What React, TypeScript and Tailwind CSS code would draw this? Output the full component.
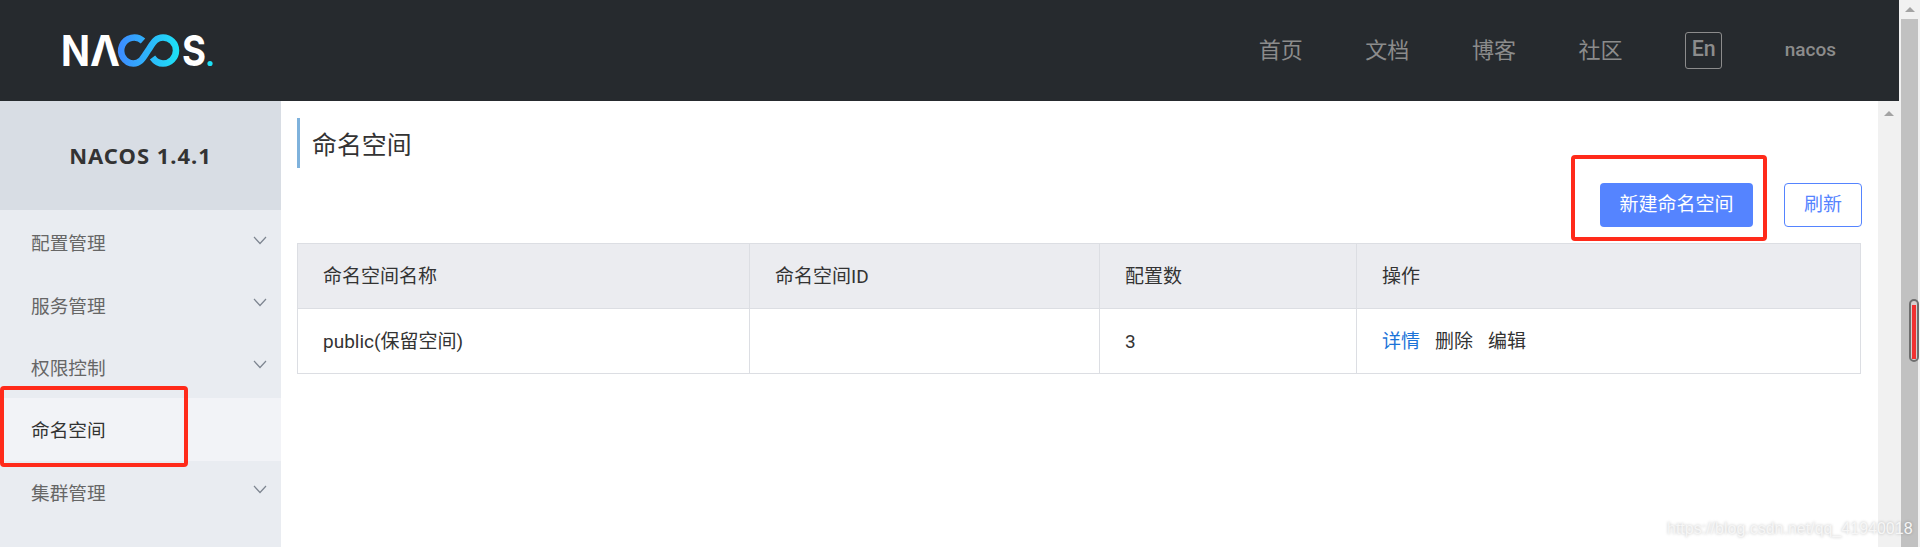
import React from 'react';

const navLinks = ['首页', '文档', '博客', '社区'];

const menuItems = [
  { label: '配置管理', hasChildren: true },
  { label: '服务管理', hasChildren: true },
  { label: '权限控制', hasChildren: true },
  { label: '命名空间', active: true },
  { label: '集群管理', hasChildren: true },
];

const Logo: React.FC = () => (
  <svg width="150" height="32" viewBox="0 0 150 32" className="block overflow-visible">
    <defs>
      <linearGradient id="infinity" gradientUnits="userSpaceOnUse" x1="56" y1="0" x2="115" y2="0">
        <stop offset="0" stopColor="#3d8bff" />
        <stop offset="1" stopColor="#1de1f6" />
      </linearGradient>
    </defs>
    <g className="fill-white font-['Inter',sans-serif] font-bold text-[43px]">
      <text x="-2" y="31" textLength="29" lengthAdjust="spacingAndGlyphs">N</text>
      <text x="27" y="31" textLength="30" lengthAdjust="spacingAndGlyphs">Λ</text>
      <text x="119" y="31" textLength="24" lengthAdjust="spacingAndGlyphs">S</text>
    </g>
    <path
      d="M80 6A13 13 0 1 0 70.5 28.5C78 28.5 80.5 22 85 15.5C89.5 9 92 2.5 100 2.5A13 13 0 1 1 100 28.5C95 28.5 92 26 89.5 22.5"
      fill="none"
      stroke="url(#infinity)"
      strokeWidth="6.5"
    />
    <circle cx="147" cy="28.5" r="2.6" fill="#1de1f6" />
  </svg>
);

const Chevron: React.FC = () => (
  <svg width="14" height="9" viewBox="0 0 14 9" className="mb-[4px]">
    <path d="M1 1l6 6.5L13 1" fill="none" stroke="#7d8590" strokeWidth="1.2" />
  </svg>
);

const ArrowUp: React.FC = () => (
  <svg width="10" height="5" viewBox="0 0 10 5" className="block">
    <path d="M5 0l5 5H0z" fill="#a3a3a3" />
  </svg>
);

const App: React.FC = () => {
  return (
    <div className="relative flex h-[547px] w-[1920px] overflow-hidden bg-white font-['Roboto','Noto_Sans_CJK_SC',sans-serif] text-[18.67px] text-[#333333]">
      <div className="flex min-w-0 flex-1 flex-col">
        <header className="flex h-[101px] shrink-0 items-center justify-between bg-[#262a2e] pl-[63px] pr-[63px]">
          <Logo />
          <nav className="flex items-center gap-[62.6px] text-[#8c8c8c]">
            {navLinks.map((link) => (
              <a key={link} className="text-[22px]">{link}</a>
            ))}
            <span className="flex h-[37px] w-[37px] items-start justify-center rounded-[3px] border border-[#8c8c8c] text-[21.33px] font-medium leading-[32px]">En</span>
            <span className="text-[19px] font-medium">nacos</span>
          </nav>
        </header>

        <div className="flex min-h-0 flex-1">
          <aside className="flex w-[281px] shrink-0 flex-col bg-[#e9ecf1]">
            <div className="flex h-[109px] shrink-0 items-center justify-center bg-[#d8dde4] font-['Noto_Sans',sans-serif] text-[22px] font-bold tracking-[1px]">
              NACOS 1.4.1
            </div>
            <ul className="pt-[1px]">
              {menuItems.map((item) => (
                <li
                  key={item.label}
                  className={
                    item.active
                      ? 'flex h-[62.4px] items-center justify-between bg-[#f2f3f7] pl-[31px] pr-[14px] text-[#333333]'
                      : 'flex h-[62.4px] items-center justify-between pl-[31px] pr-[14px] text-[#666666]'
                  }
                >
                  <span className="mt-[4px]">{item.label}</span>
                  {item.hasChildren && <Chevron />}
                </li>
              ))}
            </ul>
          </aside>

          <main className="min-w-0 flex-1 pl-[16px] pr-[17px] pt-[17px] text-[19px]">
            <div className="flex h-[50px] items-center border-l-[3px] border-[#7fb2dc] pl-[12px] pt-[5px] text-[24.9px]">
              命名空间
            </div>
            <div className="-mr-[1px] mt-[15px] flex justify-end gap-[31px]">
              <button className="h-[44px] w-[153px] rounded-[4px] bg-[#5584ff] text-white">新建命名空间</button>
              <button className="h-[44px] w-[78px] rounded-[4px] border border-[#5584ff] text-[#5584ff]">刷新</button>
            </div>
            <table className="mt-[16px] w-full table-fixed border-collapse border border-[#dcdee3]">
              <colgroup>
                <col className="w-[452px]" />
                <col className="w-[350px]" />
                <col className="w-[257px]" />
                <col />
              </colgroup>
              <thead>
                <tr className="h-[65px] bg-[#ebecf0] text-left">
                  <th className="border border-[#dcdee3] pl-[25px] pt-[2px] font-normal">命名空间名称</th>
                  <th className="border border-[#dcdee3] pl-[25px] pt-[2px] font-normal">命名空间ID</th>
                  <th className="border border-[#dcdee3] pl-[25px] pt-[2px] font-normal">配置数</th>
                  <th className="border border-[#dcdee3] pl-[25px] pt-[2px] font-normal">操作</th>
                </tr>
              </thead>
              <tbody>
                <tr className="h-[65px]">
                  <td className="border border-[#dcdee3] pl-[25px] pt-[2px]">public(保留空间)</td>
                  <td className="border border-[#dcdee3] pl-[25px] pt-[2px]"></td>
                  <td className="border border-[#dcdee3] pl-[25px] pt-[2px]">3</td>
                  <td className="border border-[#dcdee3] pl-[25px] pt-[2px]">
                    <div className="flex gap-[15px]">
                      <a className="text-[#1a73d8]">详情</a>
                      <a>删除</a>
                      <a>编辑</a>
                    </div>
                  </td>
                </tr>
              </tbody>
            </table>
          </main>

          {/* inner scrollbar */}
          <div className="flex w-[21px] shrink-0 justify-center bg-[#f1f1f1] pl-[1px] pt-[10px]">
            <ArrowUp />
          </div>
        </div>
      </div>

      {/* outer scrollbar */}
      <div className="flex w-[21px] shrink-0 flex-col bg-[#f1f1f1] pl-[2px] pr-[2px]">
        <div className="flex h-[19px] shrink-0 items-center justify-center">
          <ArrowUp />
        </div>
        <div className="flex-1 bg-[#c1c1c1]"></div>
      </div>

      {/* red annotations from the screenshot */}
      <div className="absolute left-[1571px] top-[155px] h-[86px] w-[196px] rounded-[4px] border-4 border-[#ff2a1a]"></div>
      <div className="absolute left-0 top-[386px] h-[81px] w-[188px] rounded-[4px] border-4 border-[#ff2a1a]"></div>
      <div className="absolute left-[1909px] top-[299px] h-[63px] w-[10px] rounded-[5px] border-2 border-[#6e6e6e] bg-[#d6cfcf] px-[1px] pb-[1px] pt-[4px]">
        <div className="h-full bg-[#f03030]"></div>
      </div>

      {/* watermark */}
      <div className="absolute left-[1667px] top-[519px] font-['Liberation_Sans',sans-serif] text-[16px] leading-[20px] text-[#f6f6f6] [text-shadow:0_0_3px_rgba(0,0,0,0.25)]">
        https://blog.csdn.net/qq_41940018
      </div>
    </div>
  );
};

export default App;
